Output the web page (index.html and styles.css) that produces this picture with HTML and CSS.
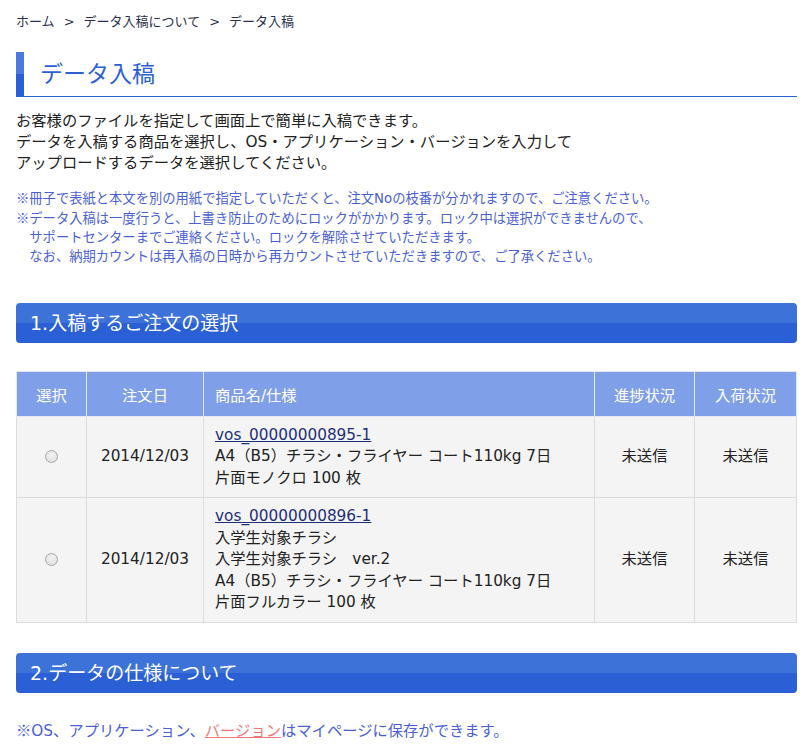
FILE: index.html
```html
<!DOCTYPE html>
<html lang="ja">
<head>
<meta charset="utf-8">
<title>データ入稿</title>
<link rel="stylesheet" href="styles.css">
</head>
<body>
<div class="page">
  <nav class="crumbs">ホーム<span class="sep">&gt;</span>データ入稿について<span class="sep">&gt;</span>データ入稿</nav>
  <h1 class="title">データ入稿</h1>
  <p class="lead">お客様のファイルを指定して画面上で簡単に入稿できます。<br>データを入稿する商品を選択し、OS・アプリケーション・バージョンを入力して<br>アップロードするデータを選択してください。</p>
  <div class="notes">
    <p><span class="mk">※</span>冊子で表紙と本文を別の用紙で指定していただくと、注文Noの枝番が分かれますので、ご注意ください。</p>
    <p><span class="mk">※</span>データ入稿は一度行うと、上書き防止のためにロックがかかります。ロック中は選択ができませんので、</p>
    <p class="indent">サポートセンターまでご連絡ください。ロックを解除させていただきます。</p>
    <p class="indent">なお、納期カウントは再入稿の日時から再カウントさせていただきますので、ご了承ください。</p>
  </div>
  <h2 class="sec">1.入稿するご注文の選択</h2>
  <table class="orders">
    <thead>
      <tr>
        <th class="c-sel">選択</th>
        <th class="c-date">注文日</th>
        <th class="c-name">商品名/仕様</th>
        <th class="c-prog">進捗状況</th>
        <th class="c-arr">入荷状況</th>
      </tr>
    </thead>
    <tbody>
      <tr class="r1">
        <td class="c-sel"><span class="radio"></span></td>
        <td class="c-date">2014/12/03</td>
        <td class="c-name"><a href="#">vos_00000000895-1</a><br>A4（B5）チラシ・フライヤー コート110kg 7日<br>片面モノクロ 100 枚</td>
        <td class="c-prog">未送信</td>
        <td class="c-arr">未送信</td>
      </tr>
      <tr class="r2">
        <td class="c-sel"><span class="radio"></span></td>
        <td class="c-date">2014/12/03</td>
        <td class="c-name"><a href="#">vos_00000000896-1</a><br>入学生対象チラシ<br>入学生対象チラシ　ver.2<br>A4（B5）チラシ・フライヤー コート110kg 7日<br>片面フルカラー 100 枚</td>
        <td class="c-prog">未送信</td>
        <td class="c-arr">未送信</td>
      </tr>
    </tbody>
  </table>
  <h2 class="sec sec2">2.データの仕様について</h2>
  <p class="foot"><span class="mk">※</span>OS、アプリケーション、<a href="#" class="pink">バージョン</a>はマイページに保存ができます。</p>
</div>
</body>
</html>
```

FILE: styles.css
```css
html, body {
  margin: 0;
  padding: 0;
  background: #fff;
}
body {
  font-family: "DejaVu Sans", "Noto Sans CJK JP", sans-serif;
  color: #333;
}
.mk {
  font-family: "Noto Sans CJK JP", sans-serif;
}
.page {
  padding: 13px 12px 0 16px;
}
.crumbs {
  font-size: 13px;
  line-height: 18px;
  color: #2b3050;
}
.crumbs .sep {
  margin: 0 9px;
}
.title {
  margin: 21px 0 0;
  height: 44px;
  border-bottom: 1px solid #2a5fd6;
  background: linear-gradient(to bottom, #4a7ade 0, #4a7ade 22px, #2a5fd6 22px) left top / 8px 100% no-repeat;
  padding-left: 24px;
  font-size: 23px;
  font-weight: normal;
  line-height: 44px;
  color: #2a5fd6;
}
.lead {
  margin: 14px 0 0;
  font-size: 15.3px;
  line-height: 21px;
  color: #222;
}
.notes {
  margin-top: 14px;
  font-size: 13.3px;
  line-height: 19px;
  color: #4b5fd6;
}
.notes p {
  margin: 0;
}
.notes .indent {
  padding-left: 1em;
}
.sec {
  margin: 37px 0 0;
  height: 40px;
  border-radius: 4px;
  background: linear-gradient(to bottom, #3d72d9 0, #3d72d9 20px, #2a5fd6 20px);
  color: #fff;
  font-size: 19px;
  font-weight: normal;
  line-height: 40px;
  padding-left: 14px;
}
.orders {
  margin-top: 28px;
  width: 100%;
  border-collapse: collapse;
  font-size: 15.3px;
  color: #222;
}
.orders th, .orders td {
  border: 1px solid #dcdcdc;
  padding: 0;
}
.orders th {
  background: #7fa0e8;
  color: #fff;
  font-weight: normal;
  height: 44px;
  text-align: center;
  border-color: #e4e8f0;
}
.orders td {
  background: #f4f4f4;
  text-align: center;
  line-height: 21.5px;
}
.orders .c-sel { width: 69px; }
.orders .c-date { width: 116px; }
.orders .c-prog { width: 99px; }
.orders .c-arr { width: 101px; }
.orders th.c-name, .orders td.c-name {
  text-align: left;
  padding-left: 11px;
}
.orders tr.r1 td { height: 80px; }
.orders tr.r2 td { height: 124px; }
.orders td.c-name a {
  color: #1d2f7a;
  text-decoration: underline;
}
.radio {
  display: inline-block;
  width: 11px;
  height: 11px;
  border-radius: 50%;
  border: 1px solid #a8a8a8;
  background: radial-gradient(circle at 50% 40%, #f2f2f2 0, #dcdcdc 100%);
  vertical-align: middle;
}
.sec2 {
  margin-top: 30px;
}
.foot {
  margin: 26px 0 0;
  font-size: 15.3px;
  line-height: 20px;
  color: #4b5fd6;
}
.foot .pink {
  color: #f07878;
  text-decoration: underline;
}
```
